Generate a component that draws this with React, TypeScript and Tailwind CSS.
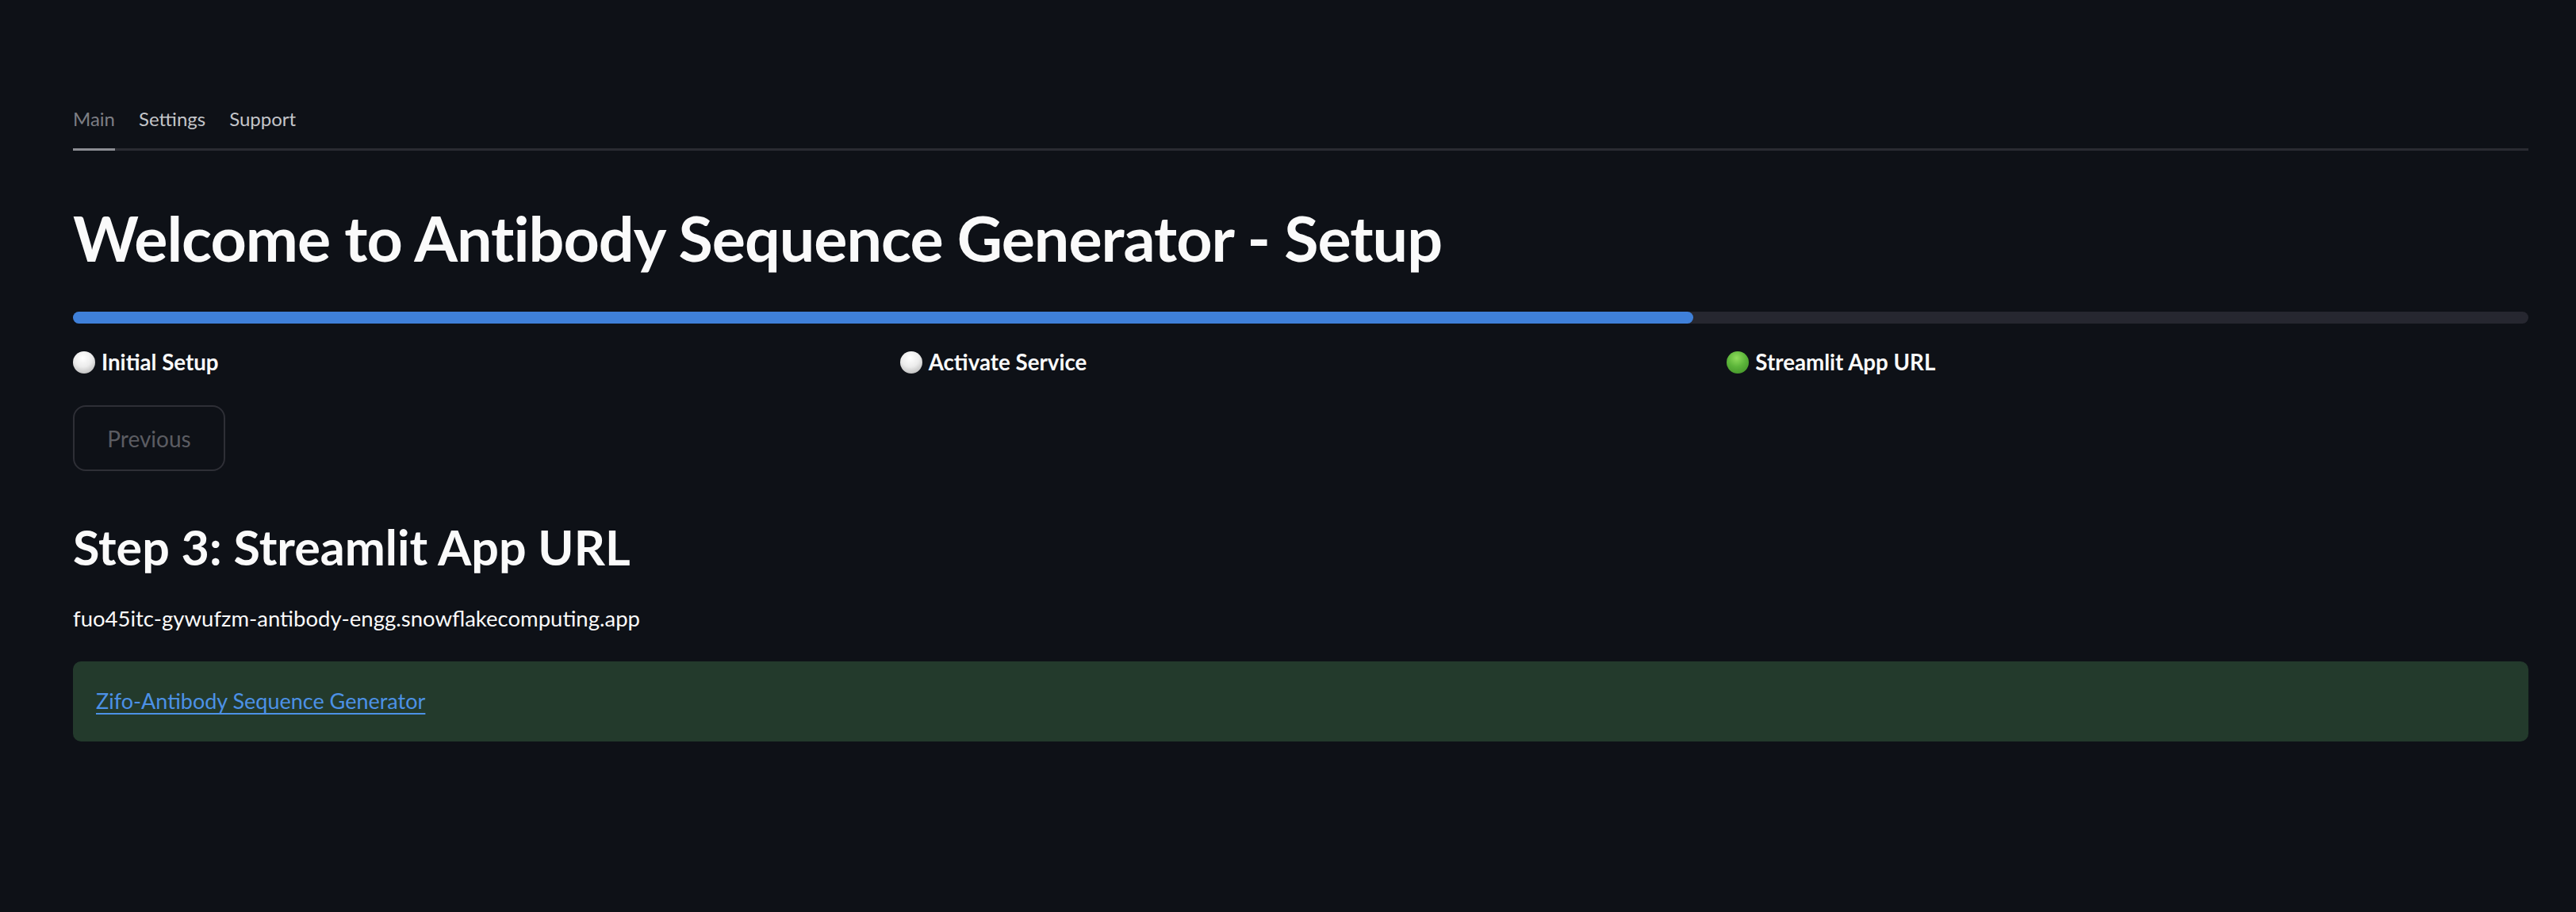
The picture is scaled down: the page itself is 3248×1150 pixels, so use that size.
import React from 'react'

const TABS = ['Main', 'Settings', 'Support']

const STEPS = [
  { label: 'Initial Setup', done: false },
  { label: 'Activate Service', done: false },
  { label: 'Streamlit App URL', done: true },
]

function Dot({ green }: { green: boolean }) {
  return green ? (
    <span className="inline-block h-[28px] w-[28px] shrink-0 rounded-full bg-[radial-gradient(circle_at_45%_30%,#8fdc5c_0%,#5cb53a_45%,#3d8a25_100%)]" />
  ) : (
    <span className="inline-block h-[28px] w-[28px] shrink-0 rounded-full bg-[radial-gradient(circle_at_45%_30%,#ffffff_0%,#ececec_45%,#a9a9a9_100%)]" />
  )
}

export default function App() {
  return (
    <div className="min-h-[1150px] w-full bg-[#0e1117] pl-[92px] pr-[60px] pt-[128px] font-['Lato','Liberation_Sans',sans-serif] text-[#fafafa]">
      {/* Tabs */}
      <div className="flex h-[62px] gap-[30px] border-b-[3px] border-[#2a2b32]">
        {TABS.map((tab, i) => (
          <div
            key={tab}
            className={
              i === 0
                ? '-mb-[3px] flex items-center border-b-[3px] border-[#8c8d93] pb-[16px] text-[24px] text-[#7d7e84]'
                : 'flex items-center pb-[16px] text-[24px] text-[#c4c5c9]'
            }
          >
            {tab}
          </div>
        ))}
      </div>

      {/* Title */}
      <h1 className="mt-[62px] text-[79px] font-bold leading-[96px] tracking-[-1px]">
        Welcome to Antibody Sequence Generator - Setup
      </h1>

      {/* Progress */}
      <div className="mt-[45px] h-[15px] w-full rounded-full bg-[#262730]">
        <div className="h-full w-[66%] rounded-full bg-[#3f80d9]" />
      </div>

      {/* Step labels */}
      <div className="mt-[29px] grid grid-cols-3 gap-[32px]">
        {STEPS.map((s) => (
          <div key={s.label} className="flex h-[40px] items-center gap-[8px] text-[27.7px] font-bold">
            <Dot green={s.done} />
            <span>{s.label}</span>
          </div>
        ))}
      </div>

      <button
        disabled
        className="mt-[34px] flex h-[83px] w-[192px] items-center justify-center rounded-[16px] border-2 border-[#2e2f36] text-[28px] text-[#5b5c62]"
      >
        Previous
      </button>

      {/* Step 3 */}
      <h2 className="mt-[56px] text-[61px] font-bold leading-[80px]">Step 3: Streamlit App URL</h2>

      <p className="mt-[30px] text-[27.5px] leading-[40px]">fuo45itc-gywufzm-antibody-engg.snowflakecomputing.app</p>

      <div className="mt-[34px] flex h-[101px] items-center rounded-[10px] bg-[#233a2c] pl-[29px]">
        <a href="#" className="text-[27px] text-[#4c91e6] underline underline-offset-[5px]">
          Zifo-Antibody Sequence Generator
        </a>
      </div>
    </div>
  )
}
